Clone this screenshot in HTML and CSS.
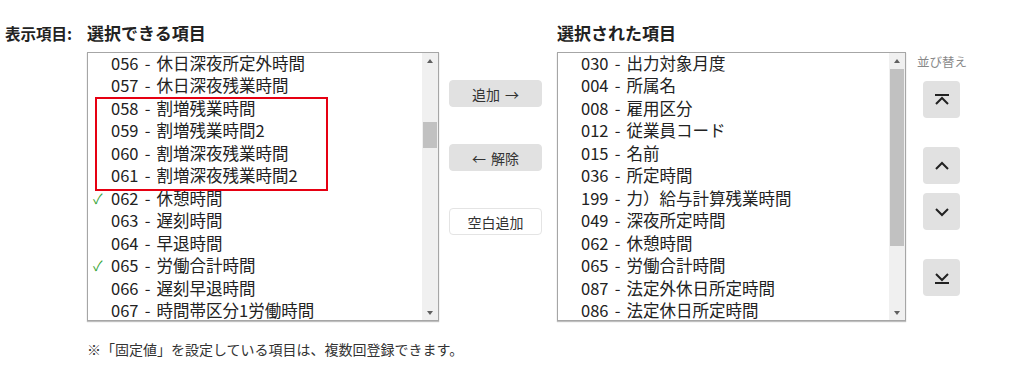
FILE: index.html
```html
<!DOCTYPE html>
<html lang="ja">
<head>
    <meta charset="UTF-8">
    <title>表示項目の設定</title>
    <link rel="stylesheet" href="styles.css">
</head>
<body>
    <div class="page">
        <div class="field-label">表示項目:</div>

        <!-- 選択できる項目 -->
        <div class="panel panel-left">
            <h2 class="panel-title">選択できる項目</h2>
            <div class="listbox">
                <ul class="items">
                    <li>056 - 休日深夜所定外時間</li>
                    <li>057 - 休日深夜残業時間</li>
                    <li>058 - 割増残業時間</li>
                    <li>059 - 割増残業時間2</li>
                    <li>060 - 割増深夜残業時間</li>
                    <li>061 - 割増深夜残業時間2</li>
                    <li class="checked">062 - 休憩時間</li>
                    <li>063 - 遅刻時間</li>
                    <li>064 - 早退時間</li>
                    <li class="checked">065 - 労働合計時間</li>
                    <li>066 - 遅刻早退時間</li>
                    <li>067 - 時間帯区分1労働時間</li>
                </ul>
                <div class="highlight-box"></div>
                <div class="scrollbar">
                    <span class="arrow arrow-up"></span>
                    <div class="track"><div class="thumb thumb-left"></div></div>
                    <span class="arrow arrow-down"></span>
                </div>
            </div>
        </div>

        <!-- 追加 / 解除 -->
        <div class="actions">
            <button class="btn">追加 →</button>
            <button class="btn">← 解除</button>
            <button class="btn btn-plain">空白追加</button>
        </div>

        <!-- 選択された項目 -->
        <div class="panel panel-right">
            <h2 class="panel-title">選択された項目</h2>
            <div class="listbox">
                <ul class="items">
                    <li>030 - 出力対象月度</li>
                    <li>004 - 所属名</li>
                    <li>008 - 雇用区分</li>
                    <li>012 - 従業員コード</li>
                    <li>015 - 名前</li>
                    <li>036 - 所定時間</li>
                    <li>199 - 力）給与計算残業時間</li>
                    <li>049 - 深夜所定時間</li>
                    <li>062 - 休憩時間</li>
                    <li>065 - 労働合計時間</li>
                    <li>087 - 法定外休日所定時間</li>
                    <li>086 - 法定休日所定時間</li>
                </ul>
                <div class="scrollbar">
                    <span class="arrow arrow-up"></span>
                    <div class="track"><div class="thumb thumb-right"></div></div>
                    <span class="arrow arrow-down"></span>
                </div>
            </div>
        </div>

        <!-- 並び替え -->
        <div class="sorter">
            <div class="sorter-label">並び替え</div>
            <button class="sort-btn sort-top" title="先頭へ">
                <svg width="18" height="14" viewBox="0 0 18 14"><path d="M2 2h14M3 11l6-6 6 6" fill="none" stroke="#222" stroke-width="2"/></svg>
            </button>
            <button class="sort-btn sort-up" title="上へ">
                <svg width="18" height="14" viewBox="0 0 18 14"><path d="M3 10l6-6 6 6" fill="none" stroke="#222" stroke-width="2"/></svg>
            </button>
            <button class="sort-btn sort-down" title="下へ">
                <svg width="18" height="14" viewBox="0 0 18 14"><path d="M3 4l6 6 6-6" fill="none" stroke="#222" stroke-width="2"/></svg>
            </button>
            <button class="sort-btn sort-bottom" title="末尾へ">
                <svg width="18" height="14" viewBox="0 0 18 14"><path d="M3 3l6 6 6-6M2 12h14" fill="none" stroke="#222" stroke-width="2"/></svg>
            </button>
        </div>
    </div>

    <p class="note">※「固定値」を設定している項目は、複数回登録できます。</p>
</body>
</html>
```

FILE: styles.css
```css
body {
    margin: 0;
    padding: 0;
    background-color: #fff;
    color: #222;
    font-family: "Noto Sans CJK JP", "Noto Sans", sans-serif;
}

.page {
    display: flex;
    align-items: flex-start;
    padding: 23px 0 0 5px;
}

.field-label {
    width: 82px;
    font-size: 15.5px;
    font-weight: bold;
    line-height: 20px;
}

.panel-title {
    margin: 0 0 9px;
    font-size: 17px;
    font-weight: bold;
    line-height: 20px;
}

.panel-left {
    width: 352px;
}

.panel-right {
    width: 349px;
    margin-left: 15px;
}

/* List boxes */
.listbox {
    position: relative;
    display: flex;
    height: 267px;
    border: 1px solid #a6a6a6;
    box-shadow: 0 1px 1px rgba(0, 0, 0, 0.25);
    overflow: hidden;
}

.items {
    flex: 1;
    margin: -1px 0 0;
    padding: 0 0 0 23px;
    list-style: none;
    font-size: 16.5px;
    word-spacing: 2.5px;
    line-height: 22.45px;
}

.items li {
    position: relative;
    white-space: nowrap;
}

.items li.checked::before {
    content: "✓";
    position: absolute;
    left: -18px;
    color: #3aa53a;
    font-size: 14px;
}

.highlight-box {
    position: absolute;
    left: 7px;
    top: 44px;
    width: 229px;
    height: 90px;
    border: 2px solid #e60012;
}

/* Scrollbars */
.scrollbar {
    display: flex;
    flex-direction: column;
    width: 16px;
    background-color: #f0f0f0;
}

.arrow {
    height: 16px;
    position: relative;
}

.arrow::after {
    content: "";
    position: absolute;
    left: 5px;
    border-left: 3.5px solid transparent;
    border-right: 3.5px solid transparent;
}

.arrow-up::after {
    top: 6px;
    border-bottom: 4px solid #606060;
}

.arrow-down::after {
    top: 7px;
    border-top: 4px solid #606060;
}

.track {
    flex: 1;
}

.thumb {
    margin: 0 1px;
    background-color: #c1c1c1;
}

.thumb-left {
    margin-top: 53px;
    height: 26px;
}

.thumb-right {
    margin-top: 0;
    height: 177px;
}

/* Middle buttons */
.actions {
    display: flex;
    flex-direction: column;
    gap: 37px;
    width: 93px;
    margin-left: 10px;
    padding-top: 57px;
}

.btn {
    height: 27px;
    padding: 0;
    border: 1px solid #e1e1e1;
    border-radius: 4px;
    background-color: #e1e1e1;
    color: #333;
    font-family: inherit;
    font-size: 14px;
    word-spacing: 2px;
}

.btn-plain {
    background-color: #fff;
    border-color: #e4e4e4;
}

/* Sort column */
.sorter {
    display: flex;
    flex-direction: column;
    margin-left: 11px;
    padding-top: 30px;
}

.sorter-label {
    font-size: 12.5px;
    line-height: 18px;
    color: #888;
    margin-bottom: 10px;
}

.sort-btn {
    display: flex;
    align-items: center;
    justify-content: center;
    width: 37px;
    height: 37px;
    margin-left: 6px;
    padding: 0;
    border: none;
    border-radius: 4px;
    background-color: #e1e1e1;
}

.sort-up {
    margin-top: 29px;
}

.sort-down {
    margin-top: 9px;
}

.sort-bottom {
    margin-top: 29px;
}

.note {
    margin: 19px 0 0 87px;
    font-size: 14px;
    line-height: 18px;
    color: #333;
}
```
